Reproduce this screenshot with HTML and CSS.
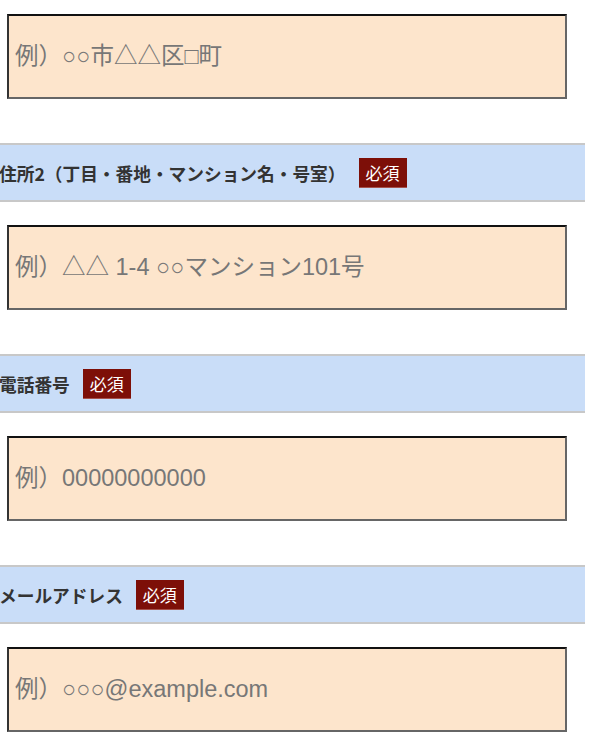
FILE: index.html
```html
<!DOCTYPE html>
<html lang="ja">

<head>
    <meta charset="UTF-8">
    <meta name="viewport" content="width=device-width, initial-scale=1.0">
    <title>お問い合わせ</title>
    <link rel="stylesheet" href="styles.css">
</head>

<body>
    <form class="entry-form">
        <div class="field">
            <input class="field-input" type="text" placeholder="例）○○市△△区□町">
        </div>

        <div class="field">
            <div class="field-label">
                <span class="label-text">住所2（丁目・番地・マンション名・号室）</span>
                <span class="required">必須</span>
            </div>
            <input class="field-input" type="text" placeholder="例）△△ 1-4 ○○マンション101号">
        </div>

        <div class="field">
            <div class="field-label">
                <span class="label-text">電話番号</span>
                <span class="required">必須</span>
            </div>
            <input class="field-input" type="tel" placeholder="例）00000000000">
        </div>

        <div class="field">
            <div class="field-label">
                <span class="label-text">メールアドレス</span>
                <span class="required">必須</span>
            </div>
            <input class="field-input" type="email" placeholder="例）○○○@example.com">
        </div>
    </form>
</body>

</html>
```

FILE: styles.css
```css
body {
    margin: 0;
    padding: 0;
    background-color: #fff;
    font-family: "Liberation Sans", Arial, "Noto Sans CJK JP", sans-serif;
    overflow: hidden;
}

.entry-form {
    padding-top: 14px;
    display: flex;
    flex-direction: column;
    gap: 44px;
}

.field {
    display: flex;
    flex-direction: column;
    gap: 23px;
}

.field-label {
    width: 585px;
    height: 59px;
    box-sizing: border-box;
    display: flex;
    align-items: center;
    gap: 13px;
    background-color: #c9ddf8;
    border-top: 2px solid #c8c8c8;
    border-bottom: 2px solid #c8c8c8;
}

.label-text {
    margin-left: -1px;
    font-family: "Noto Sans CJK JP", sans-serif;
    font-size: 17.7px;
    font-weight: bold;
    color: #333;
}

.required {
    display: inline-block;
    padding: 0 7px;
    line-height: 29px;
    font-family: "Noto Sans CJK JP", sans-serif;
    font-size: 17px;
    color: #fff;
    background-color: #7d0f08;
    border-bottom: 1px solid #a5524c;
    box-sizing: border-box;
    height: 30px;
}

.field-input {
    margin: 0 0 0 7px;
    width: 560px;
    height: 85px;
    box-sizing: border-box;
    padding: 0 6px;
    font-family: "Liberation Sans", Arial, "Noto Sans CJK JP", sans-serif;
    font-size: 23.5px;
    background-color: #fde5cc;
    border-style: solid;
    border-width: 2px;
    border-color: #111 #666 #666 #333;
    outline: none;
}

.field-input::placeholder {
    color: #777;
}
```
